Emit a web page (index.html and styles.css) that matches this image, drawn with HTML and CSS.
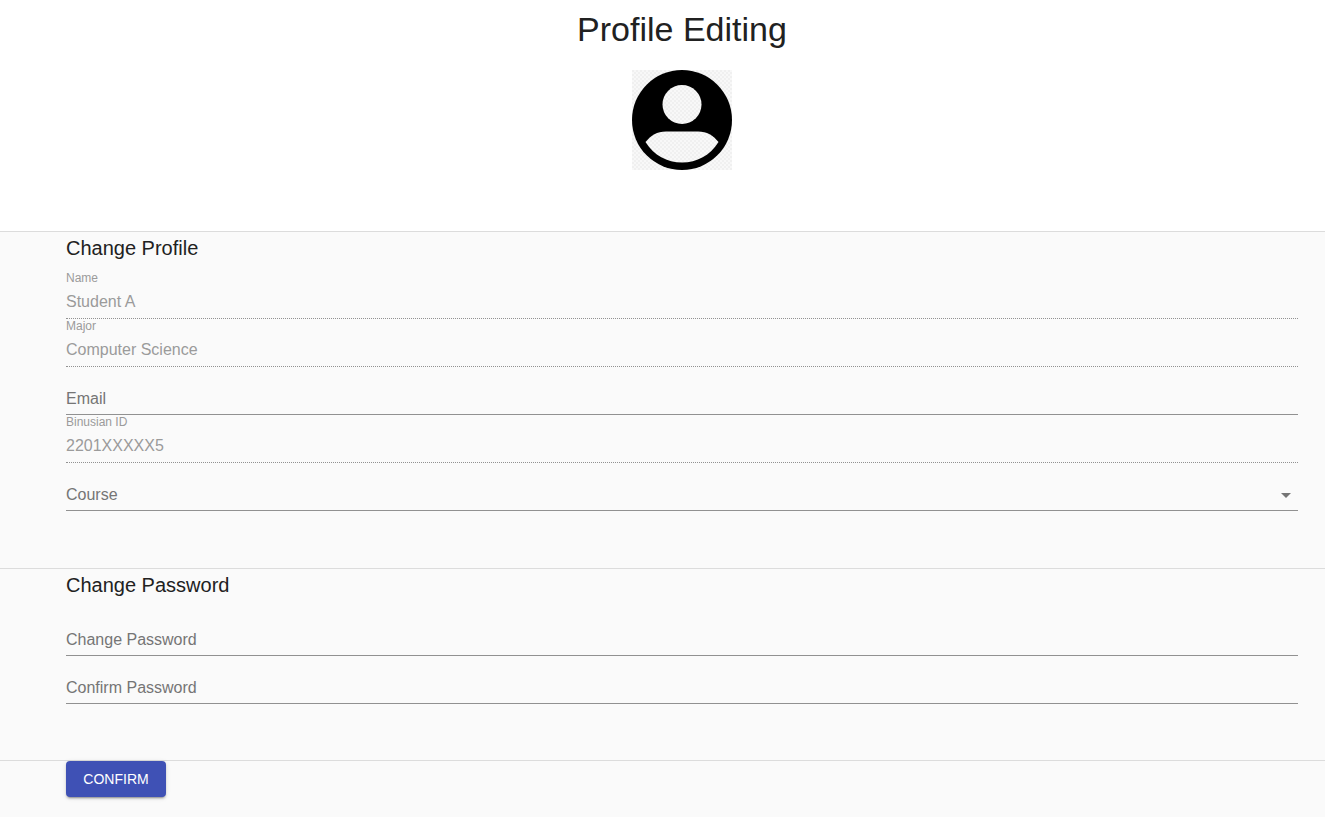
FILE: index.html
```html
<!DOCTYPE html>
<html lang="en">
<head>
<meta charset="utf-8">
<meta name="viewport" content="width=device-width, initial-scale=1">
<title>Profile Editing</title>
<link rel="stylesheet" href="styles.css">
</head>
<body>
<header class="header">
  <h1 class="title">Profile Editing</h1>
  <svg class="avatar" viewBox="0 0 100 100" role="img" aria-label="Profile picture">
    <defs>
      <pattern id="checker" width="4" height="4" patternUnits="userSpaceOnUse">
        <rect width="4" height="4" fill="#f8f8f8"/>
        <path d="M0 0h2v2H0zM2 2h2v2H2z" fill="#f0f0f0"/>
      </pattern>
    </defs>
    <rect width="100" height="100" fill="url(#checker)"/>
    <circle cx="50" cy="50" r="50"/>
    <circle cx="50" cy="34.500" r="19.500" fill="url(#checker)"/>
    <path d="M13.500 72C19 65.500 25 61.500 34 61.500H66C75 61.500 81 65.500 86.500 72C78 85.500 65 92.500 50 92.500S22 85.500 13.500 72Z" fill="url(#checker)"/>
  </svg>
</header>
<form class="form">
  <section class="section section-profile">
    <h2 class="heading">Change Profile</h2>
    <div class="field">
      <label class="label label-shrunk label-disabled" for="name">Name</label>
      <input class="input" id="name" type="text" value="Student A" disabled>
    </div>
    <div class="field">
      <label class="label label-shrunk label-disabled" for="major">Major</label>
      <input class="input" id="major" type="text" value="Computer Science" disabled>
    </div>
    <div class="field">
      <label class="label" for="email">Email</label>
      <input class="input" id="email" type="email">
    </div>
    <div class="field">
      <label class="label label-shrunk label-disabled" for="binusian">Binusian ID</label>
      <input class="input" id="binusian" type="text" value="2201XXXXX5" disabled>
    </div>
    <div class="field">
      <label class="label" for="course">Course</label>
      <select class="input" id="course"><option value=""></option></select>
      <svg class="arrow" viewBox="0 0 24 24" aria-hidden="true"><path d="M7 10l5 5 5-5z"/></svg>
    </div>
  </section>
  <section class="section">
    <h2 class="heading">Change Password</h2>
    <div class="field">
      <label class="label" for="password">Change Password</label>
      <input class="input" id="password" type="password">
    </div>
    <div class="field">
      <label class="label" for="confirm">Confirm Password</label>
      <input class="input" id="confirm" type="password">
    </div>
  </section>
  <div class="section actions">
    <button class="button" type="submit">CONFIRM</button>
  </div>
</form>
</body>
</html>
```

FILE: styles.css
```css
* {
  box-sizing: border-box;
}

body {
  margin: 0;
  background: #fafafa;
  color: #212121;
  font-family: "Liberation Sans", Arial, sans-serif;
}

.header {
  display: flex;
  flex-direction: column;
  align-items: center;
  gap: 20px;
  padding: 8px 27px 61px 66px;
  background: #fff;
}

.title {
  margin: 0;
  font-size: 34px;
  font-weight: 400;
  line-height: 42px;
}

.avatar {
  display: block;
  width: 100px;
  height: 100px;
}

.section {
  padding: 0 27px 56px 66px;
  border-top: 1px solid #dcdcdc;
}

.section-profile {
  padding-bottom: 57px;
}

.heading {
  margin: 0 0 7px;
  font-size: 20px;
  font-weight: 400;
  line-height: 32px;
}

.field {
  display: grid;
}

.label,
.input,
.arrow {
  grid-area: 1 / 1;
}

.label {
  z-index: 1;
  justify-self: start;
  padding-top: 23px;
  color: #757575;
  font-size: 16px;
  line-height: 18px;
  pointer-events: none;
}

.label-shrunk {
  padding-top: 0;
  font-size: 12px;
  line-height: 14px;
}

.label-disabled {
  color: #9b9b9b;
}

.input {
  width: 100%;
  height: 32px;
  margin: 16px 0 0;
  padding: 6px 0 7px;
  border: 0;
  border-bottom: 1px solid #919191;
  border-radius: 0;
  outline: 0;
  appearance: none;
  background: transparent;
  color: #212121;
  font: inherit;
  font-size: 16px;
  line-height: 18px;
}

.input:focus {
  border-bottom-color: #3f51b5;
}

.input:disabled {
  border-bottom-style: dotted;
  color: #9b9b9b;
  opacity: 1;
}

.arrow {
  justify-self: end;
  width: 24px;
  height: 24px;
  margin-top: 20px;
  fill: #757575;
  pointer-events: none;
}

.actions {
  padding-bottom: 20px;
}

.button {
  display: block;
  min-width: 100px;
  height: 36px;
  padding: 0 16px;
  border: 0;
  border-radius: 4px;
  background: #3f51b5;
  box-shadow: 0 3px 1px -2px rgba(0, 0, 0, 0.2), 0 2px 2px 0 rgba(0, 0, 0, 0.14), 0 1px 5px 0 rgba(0, 0, 0, 0.12);
  color: #fff;
  font-family: inherit;
  font-size: 14px;
  cursor: pointer;
}
```
